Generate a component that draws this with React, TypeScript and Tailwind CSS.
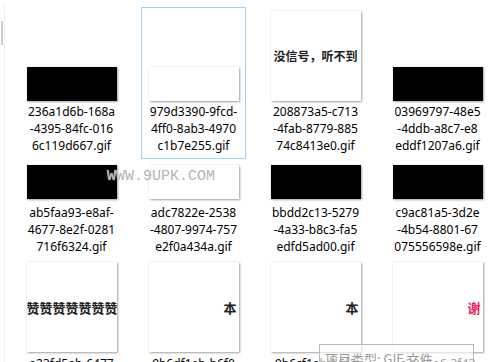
import React from "react";

type Thumb =
  | { kind: "wide"; color: "black" | "white" }
  | { kind: "square"; text?: string; align?: "center" | "right" | "left"; red?: boolean; size?: number };

type Item = { thumb: Thumb; lines: string[] };

const rows: { h: number; gapTop: number; mt: string; items: Item[] }[] = [
  {
    h: 90,
    gapTop: 2,
    mt: "",
    items: [
      { thumb: { kind: "wide", color: "black" }, lines: ["236a1d6b-168a", "-4395-84fc-016", "6c119d667.gif"] },
      { thumb: { kind: "wide", color: "white" }, lines: ["979d3390-9fcd-", "4ff0-8ab3-4970", "c1b7e255.gif"] },
      { thumb: { kind: "square", text: "没信号，听不到", align: "center", size: 12 }, lines: ["208873a5-c713", "-4fab-8779-885", "74c8413e0.gif"] },
      { thumb: { kind: "wide", color: "black" }, lines: ["03969797-48e5", "-4ddb-a8c7-e8", "eddf1207a6.gif"] },
    ],
  },
  {
    h: 34,
    gapTop: 5,
    mt: "mt-[2px]",
    items: [
      { thumb: { kind: "wide", color: "black" }, lines: ["ab5faa93-e8af-", "4677-8e2f-0281", "716f6324.gif"] },
      { thumb: { kind: "wide", color: "white" }, lines: ["adc7822e-2538", "-4807-9974-757", "e2f0a434a.gif"] },
      { thumb: { kind: "wide", color: "black" }, lines: ["bbdd2c13-5279", "-4a33-b8c3-fa5", "edfd5ad00.gif"] },
      { thumb: { kind: "wide", color: "black" }, lines: ["c9ac81a5-3d2e", "-4b54-8801-67", "075556598e.gif"] },
    ],
  },
  {
    h: 90,
    gapTop: 3,
    mt: "-mt-[2px]",
    items: [
      { thumb: { kind: "square", text: "赞赞赞赞赞赞赞", align: "left", size: 13 }, lines: ["a23fd5eb-6477", "-4c1d-9a2e-0b1", "5e7c2d91.gif"] },
      { thumb: { kind: "square", text: "本", align: "right", size: 13 }, lines: ["9b6df1eb-b6f0", "-4a12-8c3d-91", "f0e2a7c6.gif"] },
      { thumb: { kind: "square", text: "本", align: "right", size: 13 }, lines: ["9b6cf1eb-b6f2", "-4e17-a0b3-5c", "7d2e81f0.gif"] },
      { thumb: { kind: "square", text: "谢", align: "right", red: true, size: 13 }, lines: ["c2041a6-3f43", "-4d8e-b1c2-7a", "90e6f3d1.gif"] },
    ],
  },
];

const shadow = "shadow-[0_0_1px_rgba(0,0,0,0.18),1px_1px_2px_rgba(0,0,0,0.35)]";

function ThumbView({ t }: { t: Thumb }) {
  if (t.kind === "wide") {
    return (
      <div
        className={`w-[90px] h-[34px] ${t.color === "black" ? "bg-black" : "bg-white"} ${shadow}`}
      />
    );
  }
  const justify =
    t.align === "right" ? "justify-end pr-[2px]" : t.align === "left" ? "justify-start" : "justify-center";
  return (
    <div className={`w-[90px] h-[90px] bg-white ${shadow} flex items-center overflow-hidden ${justify}`}>
      {t.text && (
        <span
          className={`whitespace-nowrap font-bold leading-none ${t.red ? "text-[#e61e5a]" : "text-[#222222]"} ${
            t.size === 13 ? "text-[13px]" : "text-[12px]"
          }`}
          style={{ fontFamily: '"Noto Sans CJK SC", sans-serif' }}
        >
          {t.text}
        </span>
      )}
    </div>
  );
}

export default function App() {
  return (
    <div className="w-[488px] h-[362px] bg-white overflow-hidden relative flex">
      {/* left pane edge */}
      <div className="w-[4px] shrink-0 flex flex-col">
        <div className="mt-[21px] ml-[1px] w-[2px] h-[24px] bg-[#cdcdcd]" />
      </div>
      <div className="w-px shrink-0 flex flex-col">
        <div className="mt-[5px] flex-1 bg-[#efefef]" />
      </div>

      <div
        className="flex flex-col pl-[14px] pt-[7px] text-[12px] leading-[17px] text-black"
        style={{ fontFamily: '"Noto Sans", "Noto Sans CJK SC", sans-serif' }}
      >
        {rows.map((row, ri) => (
          <div key={ri} className={`flex gap-[17px] ${row.mt}`}>
            {row.items.map((it, ci) => {
              const selected = ri === 0 && ci === 1;
              return (
                <div
                  key={ci}
                  className={`w-[105px] shrink-0 border flex flex-col items-center pt-[3px] pb-[4px] ${
                    selected ? "border-[#99d1ff]" : "border-transparent"
                  }`}
                >
                  <div
                    className="w-[90px] flex items-end justify-center"
                    style={{ height: row.h }}
                  >
                    <ThumbView t={it.thumb} />
                  </div>
                  <div
                    className="flex flex-col items-center whitespace-nowrap"
                    style={{ marginTop: row.gapTop }}
                  >
                    {it.lines.map((l, li) => (
                      <span key={li}>{l}</span>
                    ))}
                  </div>
                </div>
              );
            })}
          </div>
        ))}
      </div>

      {/* watermark */}
      <div
        className="absolute left-[107px] top-[169px] text-[15px] leading-[16px] text-[#b4b4b4] tracking-[0px]"
        style={{ fontFamily: '"Liberation Mono", monospace', textShadow: "0 0 1px #ffffff" }}
      >
        WWW.9UPK.COM
      </div>

      {/* tooltip */}
      <div className="absolute left-[319px] top-[344px] w-[155px] h-[24px] border border-[#b8b8b8] bg-white/60 px-[5px] pt-[1px]">
        <span
          className="text-[13px] leading-[18px] text-[#9a9a9a]"
          style={{ fontFamily: '"Noto Sans CJK SC", sans-serif' }}
        >
          项目类型: GIF 文件
        </span>
      </div>
    </div>
  );
}
